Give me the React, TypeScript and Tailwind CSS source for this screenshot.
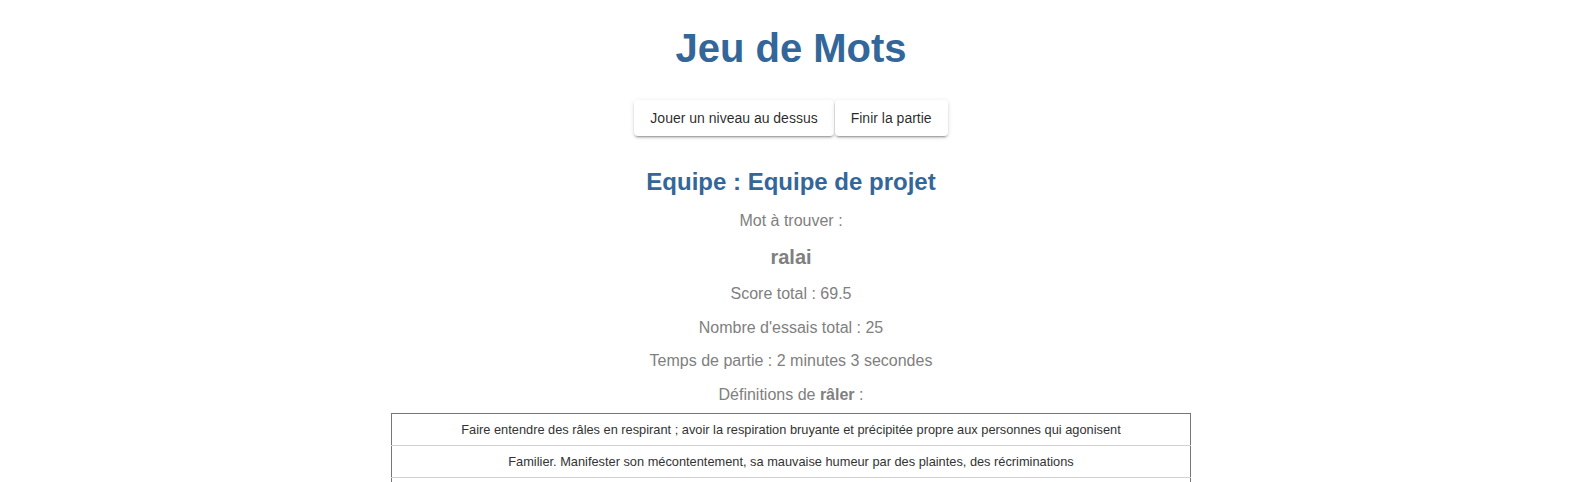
import React from 'react';

const definitions = [
  "Faire entendre des râles en respirant ; avoir la respiration bruyante et précipitée propre aux personnes qui agonisent",
  "Familier. Manifester son mécontentement, sa mauvaise humeur par des plaintes, des récriminations",
  "Pousser son cri, en parlant du tigre",
];

export default function App() {
  return (
    <div className="min-h-screen bg-white text-center font-['Liberation_Sans',Arial,sans-serif] pt-[26px]">
      <h1 className="text-[40px] leading-[normal] font-bold text-[#336699]">Jeu de Mots</h1>

      <div className="mt-[29px] flex justify-center gap-[1px]">
        {["Jouer un niveau au dessus", "Finir la partie"].map((label) => (
          <button
            key={label}
            className="h-9 px-4 rounded bg-white text-[14px] text-black/85 shadow-[0_3px_1px_-2px_rgba(0,0,0,0.2),0_2px_2px_0_rgba(0,0,0,0.14),0_1px_5px_0_rgba(0,0,0,0.12)]"
          >
            {label}
          </button>
        ))}
      </div>

      <h2 className="mt-[32px] text-[24px] leading-[28px] font-bold text-[#336699]">Equipe : Equipe de projet</h2>

      <div className="text-[16px] leading-[18px] text-[#808080]">
        <p className="mt-[16px]">Mot à trouver :</p>
        <p className="mt-[16px] text-[20px] leading-[23px] font-bold">ralai</p>
        <p className="mt-[16px]">Score total : 69.5</p>
        <p className="mt-[16px]">Nombre d'essais total : 25</p>
        <p className="mt-[15px]">Temps de partie : 2 minutes 3 secondes</p>
        <p className="mt-[16px]">
          Définitions de <b>râler</b> :
        </p>
      </div>

      <table className="mx-auto mt-[9px] w-[800px] border border-[#777] border-collapse text-[12.8px] text-[#333]">
        <tbody>
          {definitions.map((d, i) => (
            <tr key={i} className="border-b border-[#d3d3d3]">
              <td className="h-[32px] px-2">{d}</td>
            </tr>
          ))}
        </tbody>
      </table>
    </div>
  );
}
